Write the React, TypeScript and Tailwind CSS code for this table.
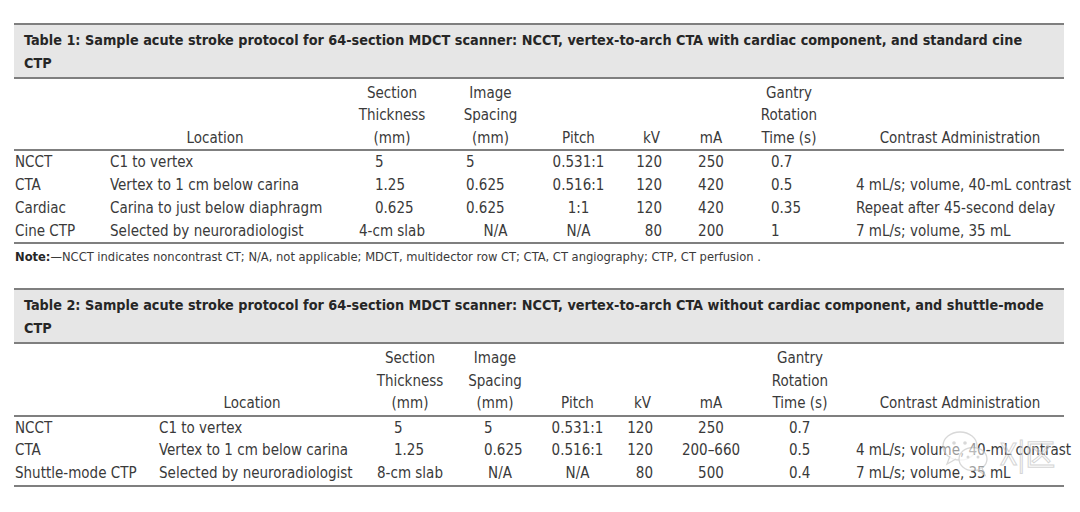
import React from 'react';

type Col = { w: string; head: string; cell: string; alt?: string };

const cols1: Col[] = [
    { w: 'w-[96px]', head: 'text-left', cell: 'text-left pl-px' },
    { w: 'w-[232px]', head: 'text-center pr-[22px]', cell: 'text-left' },
    { w: 'w-[100px]', head: 'text-center', cell: 'text-left pl-[33px]', alt: 'text-center' },
    { w: 'w-[93px]', head: 'text-center pl-[4px]', cell: 'text-left pl-[24px]', alt: 'text-center pl-[14px]' },
    { w: 'w-[87px]', head: 'text-center', cell: 'text-center' },
    { w: 'w-[48px]', head: 'text-right pr-[10px]', cell: 'text-right pr-[8px]' },
    { w: 'w-[82px]', head: 'text-center', cell: 'text-center' },
    { w: 'w-[74px]', head: 'text-center', cell: 'text-left pl-[19px]' },
    { w: 'w-[238px]', head: 'text-center pl-[30px]', cell: 'text-left pl-[30px]' },
];

const cols2: Col[] = [
    { w: 'w-[145px]', head: 'text-left', cell: 'text-left pl-px' },
    { w: 'w-[211px]', head: 'text-center pr-[25px]', cell: 'text-left' },
    { w: 'w-[80px]', head: 'text-center', cell: 'text-left pl-[24px]', alt: 'text-center' },
    { w: 'w-[90px]', head: 'text-center', cell: 'text-left pl-[34px]', alt: 'text-center pl-[10px]' },
    { w: 'w-[75px]', head: 'text-center', cell: 'text-center' },
    { w: 'w-[50px]', head: 'text-right pr-[14px]', cell: 'text-right pr-[12px]' },
    { w: 'w-[92px]', head: 'text-center', cell: 'text-center' },
    { w: 'w-[86px]', head: 'text-center', cell: 'text-left pl-[32px]' },
    { w: 'w-[221px]', head: 'text-center pl-[13px]', cell: 'text-left pl-[13px]' },
];

const headers: string[][] = [
    [''],
    ['Location'],
    ['Section', 'Thickness', '(mm)'],
    ['Image', 'Spacing', '(mm)'],
    ['Pitch'],
    ['kV'],
    ['mA'],
    ['Gantry', 'Rotation', 'Time (s)'],
    ['Contrast Administration'],
];

const rows1 = [
    ['NCCT', 'C1 to vertex', '5', '5', '0.531:1', '120', '250', '0.7', ''],
    ['CTA', 'Vertex to 1 cm below carina', '1.25', '0.625', '0.516:1', '120', '420', '0.5', '4 mL/s; volume, 40-mL contrast'],
    ['Cardiac', 'Carina to just below diaphragm', '0.625', '0.625', '1:1', '120', '420', '0.35', 'Repeat after 45-second delay'],
    ['Cine CTP', 'Selected by neuroradiologist', '4-cm slab', 'N/A', 'N/A', '80', '200', '1', '7 mL/s; volume, 35 mL'],
];

const rows2 = [
    ['NCCT', 'C1 to vertex', '5', '5', '0.531:1', '120', '250', '0.7', ''],
    ['CTA', 'Vertex to 1 cm below carina', '1.25', '0.625', '0.516:1', '120', '200–660', '0.5', '4 mL/s; volume, 40-mL contrast'],
    ['Shuttle-mode CTP', 'Selected by neuroradiologist', '8-cm slab', 'N/A', 'N/A', '80', '500', '0.4', '7 mL/s; volume, 35 mL'],
];

const isNumber = (v: string) => /^[0-9.]+$/.test(v);

const ProtocolTable: React.FC<{ title: string[]; cols: Col[]; rows: string[][] }> = ({ title, cols, rows }) => (
    <div>
        <div className="border-y-2 border-[#7f7f7f] bg-[#e6e6e6] pl-[10px] pt-[4px] pb-[2px] text-[14.3px] leading-[23px] font-bold text-[#262626]">
            {title.map((line) => (
                <div key={line} className="whitespace-nowrap">{line}</div>
            ))}
        </div>
        <table className="w-full table-fixed border-collapse text-[15px] text-[#3a3a3a]">
            <colgroup>
                {cols.map((c, i) => (
                    <col key={i} className={c.w} />
                ))}
            </colgroup>
            <thead>
                <tr className="border-b-2 border-[#7f7f7f]">
                    {headers.map((h, i) => (
                        <th key={i} className={`align-bottom pt-[3px] font-normal leading-[22.4px] ${cols[i].head}`}>
                            {h.map((line, j) => (
                                <div key={j} className="whitespace-nowrap">{line}</div>
                            ))}
                        </th>
                    ))}
                </tr>
            </thead>
            <tbody className="border-b-2 border-[#7f7f7f]">
                {rows.map((r, i) => (
                    <tr key={i}>
                        {r.map((v, j) => (
                            <td
                                key={j}
                                className={`whitespace-nowrap p-0 leading-[22.8px] ${cols[j].alt && !isNumber(v) ? cols[j].alt : cols[j].cell}`}
                            >
                                {v}
                            </td>
                        ))}
                    </tr>
                ))}
            </tbody>
        </table>
    </div>
);

const Watermark: React.FC = () => (
    <div className="absolute left-[938px] top-[424px] flex items-center gap-[6px] opacity-70">
        <svg width="56" height="56" viewBox="0 0 56 56">
            <ellipse cx="22" cy="22" rx="17" ry="14" fill="#ffffff" fillOpacity="0.7" stroke="#c8c8c8" strokeWidth="1.3" />
            <path d="M12 32 L9 40 L18 35" fill="#ffffff" fillOpacity="0.7" stroke="#c8c8c8" strokeWidth="1.3" />
            <ellipse cx="35" cy="35" rx="14" ry="11.5" fill="#ffffff" fillOpacity="0.75" stroke="#c8c8c8" strokeWidth="1.3" />
            <path d="M44 44 L47 51 L39 46" fill="#ffffff" fillOpacity="0.75" stroke="#c8c8c8" strokeWidth="1.3" />
            <circle cx="16" cy="19" r="1.8" fill="#c8c8c8" />
            <circle cx="27" cy="19" r="1.8" fill="#c8c8c8" />
            <circle cx="30" cy="33" r="1.5" fill="#c8c8c8" />
            <circle cx="40" cy="33" r="1.5" fill="#c8c8c8" />
        </svg>
        <span className="text-[30px] leading-none text-white/40 [-webkit-text-stroke:1px_#c4c4c4] font-['Noto_Sans_CJK_SC',sans-serif]">
            X|区
        </span>
    </div>
);

const App: React.FC = () => {
    return (
        <div className="relative w-[1080px] h-[512px] bg-white pt-[23px] pl-[14px] pr-[16px] font-['DejaVu_Sans_Condensed',sans-serif] overflow-hidden">
            <ProtocolTable
                title={[
                    'Table 1: Sample acute stroke protocol for 64-section MDCT scanner: NCCT, vertex-to-arch CTA with cardiac component, and standard cine',
                    'CTP',
                ]}
                cols={cols1}
                rows={rows1}
            />
            <p className="pl-px pt-[5px] text-[12.8px] leading-[16px] text-[#3a3a3a]">
                <span className="font-bold text-[#262626]">Note:</span>—NCCT indicates noncontrast CT; N/A, not applicable; MDCT,
                multidector row CT; CTA, CT angiography; CTP, CT perfusion .
            </p>
            <div className="pt-[23px]">
                <ProtocolTable
                    title={[
                        'Table 2: Sample acute stroke protocol for 64-section MDCT scanner: NCCT, vertex-to-arch CTA without cardiac component, and shuttle-mode',
                        'CTP',
                    ]}
                    cols={cols2}
                    rows={rows2}
                />
            </div>
            <Watermark />
        </div>
    );
};

export default App;
